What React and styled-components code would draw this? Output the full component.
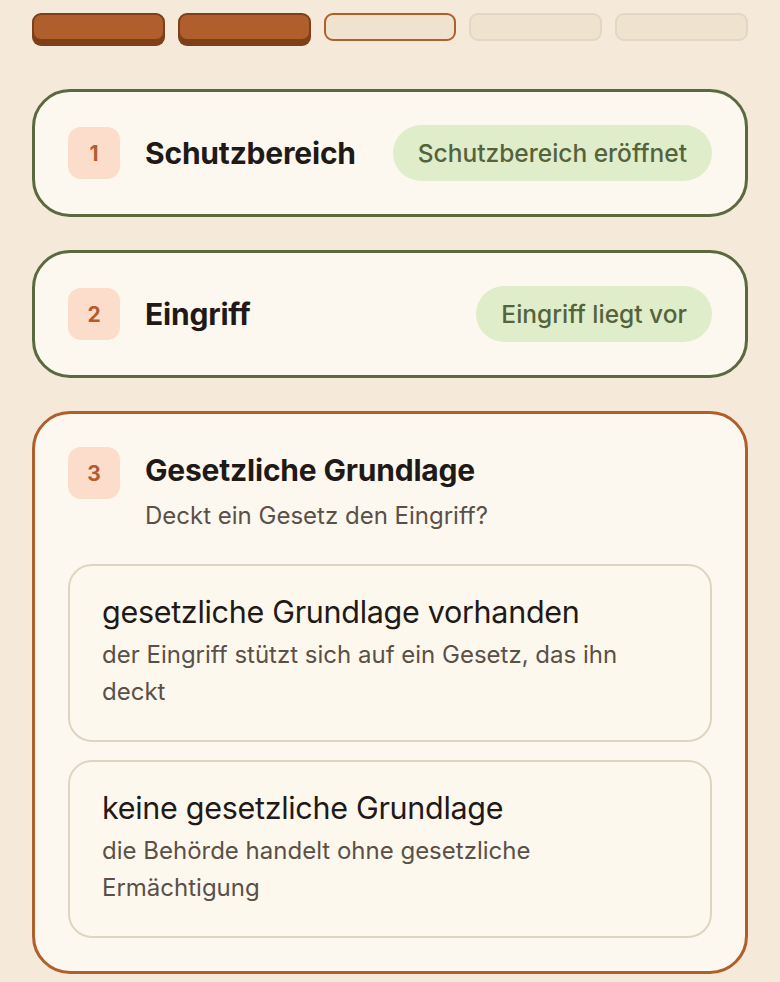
import React from 'react';
import styled, { createGlobalStyle } from 'styled-components';

const GlobalStyle = createGlobalStyle`
  * { box-sizing: border-box; }
  body {
    margin: 0;
    background: #f5e9d9;
    font-family: Inter, "Noto Sans", sans-serif;
    color: #1f1a17;
  }
`;

const Page = styled.div`
  padding: 13px 32px 12px;
  display: flex;
  flex-direction: column;
`;

const Progress = styled.div`
  display: grid;
  grid-template-columns: repeat(5, 1fr);
  gap: 13px;
  margin-bottom: 48px;
`;

const Segment = styled.div`
  height: 28px;
  border-radius: 9px;
  background: ${(p) => (p.$state === 'done' ? '#b05e2c' : '#efe3cf')};
  border: 2px solid ${(p) => {
    if (p.$state === 'done') return '#7d4019';
    if (p.$state === 'current') return '#b05e2c';
    return '#e2d7c3';
  }};
  box-shadow: ${(p) => (p.$state === 'done' ? '0 5px 0 #7d4019' : 'none')};
`;

const Steps = styled.div`
  display: flex;
  flex-direction: column;
  gap: 33px;
`;

const Card = styled.section`
  background: #fdf8ef;
  border: 3px solid ${(p) => (p.$active ? '#b05e2c' : '#5b6941')};
  border-radius: 38px;
  padding: 33px 33px;
`;

const Head = styled.div`
  display: flex;
  align-items: ${(p) => (p.$top ? 'flex-start' : 'center')};
  gap: 25px;
`;

const Badge = styled.div`
  flex: none;
  width: 52px;
  height: 52px;
  border-radius: 13px;
  background: #fcdccb;
  color: #b05e2c;
  font-weight: 700;
  font-size: 21px;
  display: flex;
  align-items: center;
  justify-content: center;
`;

const TitleBox = styled.div`
  flex: 1;
  display: flex;
  flex-direction: column;
  gap: 10px;
  padding-top: ${(p) => (p.$top ? '4px' : '0')};
`;

const Title = styled.h2`
  margin: 0;
  font-size: 30px;
  line-height: 38px;
  font-weight: 700;
  letter-spacing: -0.2px;
  color: #1f1a17;
`;

const Subtitle = styled.p`
  margin: 0;
  font-size: 24px;
  line-height: 34px;
  color: #5b5048;
`;

const Pill = styled.div`
  flex: none;
  height: 56px;
  padding: 0 25px;
  border-radius: 28px;
  background: #dfedcb;
  color: #55633d;
  font-size: 24.5px;
  font-weight: 500;
  display: flex;
  align-items: center;
`;

const Options = styled.div`
  display: flex;
  flex-direction: column;
  gap: 18px;
  margin-top: 31px;
`;

const Option = styled.button`
  text-align: left;
  font-family: inherit;
  background: #fdf8ee;
  border: 2px solid #ddd5c0;
  border-radius: 24px;
  padding: 27px 32px 30px;
  display: flex;
  flex-direction: column;
  gap: 5px;
  cursor: pointer;
`;

const OptionTitle = styled.span`
  font-size: 30.5px;
  line-height: 38px;
  color: #1f1a17;
  letter-spacing: -0.3px;
`;

const OptionText = styled.span`
  font-size: 24px;
  line-height: 37px;
  color: #5b5048;
`;

const progress = ['done', 'done', 'current', 'todo', 'todo'];

export default function App() {
  return (
    <>
      <GlobalStyle />
      <Page>
        <Progress>
          {progress.map((s, i) => <Segment key={i} $state={s} />)}
        </Progress>
        <Steps>
          <Card>
            <Head>
              <Badge>1</Badge>
              <TitleBox><Title>Schutzbereich</Title></TitleBox>
              <Pill>Schutzbereich eröffnet</Pill>
            </Head>
          </Card>
          <Card>
            <Head>
              <Badge>2</Badge>
              <TitleBox><Title>Eingriff</Title></TitleBox>
              <Pill>Eingriff liegt vor</Pill>
            </Head>
          </Card>
          <Card $active>
            <Head $top>
              <Badge>3</Badge>
              <TitleBox $top>
                <Title>Gesetzliche Grundlage</Title>
                <Subtitle>Deckt ein Gesetz den Eingriff?</Subtitle>
              </TitleBox>
            </Head>
            <Options>
              <Option>
                <OptionTitle>gesetzliche Grundlage vorhanden</OptionTitle>
                <OptionText>der Eingriff stützt sich auf ein Gesetz, das ihn deckt</OptionText>
              </Option>
              <Option>
                <OptionTitle>keine gesetzliche Grundlage</OptionTitle>
                <OptionText>die Behörde handelt ohne gesetzliche Ermächtigung</OptionText>
              </Option>
            </Options>
          </Card>
        </Steps>
      </Page>
    </>
  );
}
